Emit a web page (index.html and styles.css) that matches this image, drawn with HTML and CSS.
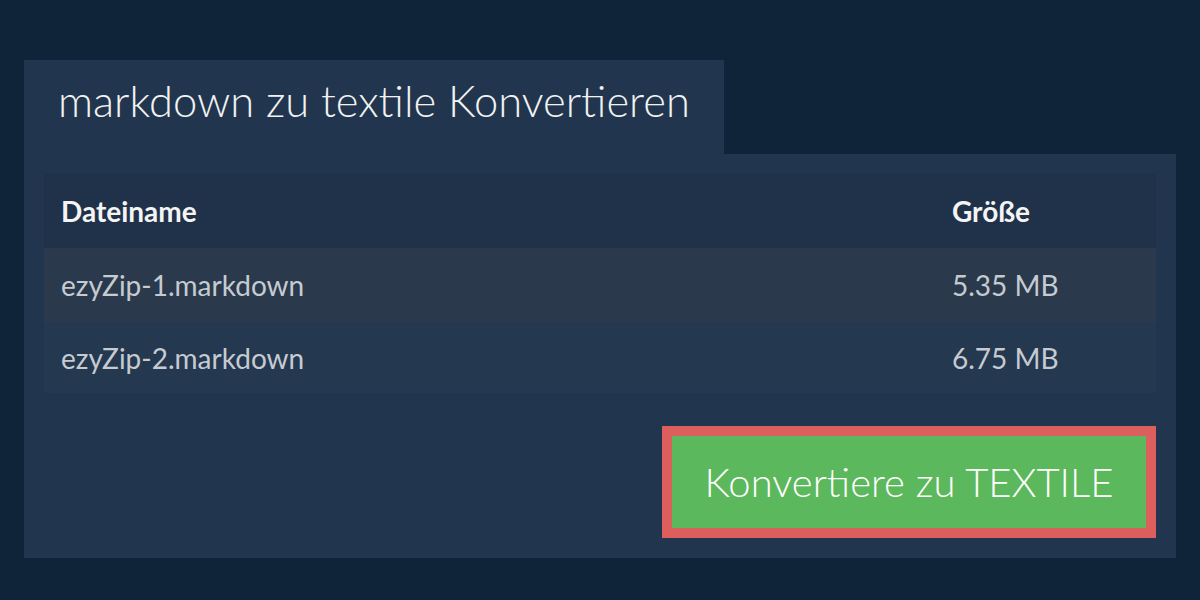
FILE: index.html
```html
<!DOCTYPE html>
<html lang="de">
<head>
<meta charset="utf-8">
<title>markdown zu textile Konvertieren</title>
<link rel="stylesheet" href="styles.css">
</head>
<body>
<div class="wrap">
  <div class="tab">markdown zu textile Konvertieren</div>
  <div class="panel">
    <table class="files">
      <thead>
        <tr><th class="name">Dateiname</th><th class="size">Größe</th></tr>
      </thead>
      <tbody>
        <tr class="odd"><td class="name">ezyZip-1.markdown</td><td class="size">5.35 MB</td></tr>
        <tr class="even"><td class="name">ezyZip-2.markdown</td><td class="size">6.75 MB</td></tr>
      </tbody>
    </table>
    <div class="actions">
      <button class="convert">Konvertiere zu TEXTILE</button>
    </div>
  </div>
</div>
</body>
</html>
```
FILE: styles.css
```css
html, body {
  margin: 0;
  padding: 0;
  background: #0f2339;
  font-family: Lato, "Open Sans", sans-serif;
}
.wrap {
  padding: 60px 24px 0 24px;
}
.tab {
  display: inline-block;
  box-sizing: border-box;
  width: 700px;
  height: 94px;
  padding: 13px 0 0 34px;
  background: #21364e;
  color: #f2f2f2;
  font-size: 43.5px;
  font-weight: 300;
  line-height: 54px;
  white-space: nowrap;
  vertical-align: top;
}
.panel {
  background: #21364e;
  padding: 20px 20px 20px 20px;
}
.files {
  width: 100%;
  border-collapse: collapse;
  font-size: 28px;
}
.files th, .files td {
  text-align: left;
  padding: 0 0 0 17px;
  white-space: nowrap;
}
.files th {
  height: 74px;
  background: #1f3249;
  color: #f4f4f4;
  font-weight: 700;
}
.files td {
  color: #c6cbd2;
  font-weight: 400;
}
.files tr.odd td {
  height: 74px;
  background: #2a3a4c;
}
.files tr.even td {
  height: 71px;
  background: #243850;
}
.files .size {
  width: 204px;
}
.actions {
  display: flex;
  justify-content: flex-end;
  margin-top: 33px;
}
.convert {
  box-sizing: border-box;
  width: 494px;
  height: 112px;
  border: 10px solid #dc5f5d;
  background: #5cb85c;
  color: #ffffff;
  font-family: Lato, "Open Sans", sans-serif;
  font-size: 40px;
  font-weight: 300;
  padding: 0;
  cursor: pointer;
}
```
